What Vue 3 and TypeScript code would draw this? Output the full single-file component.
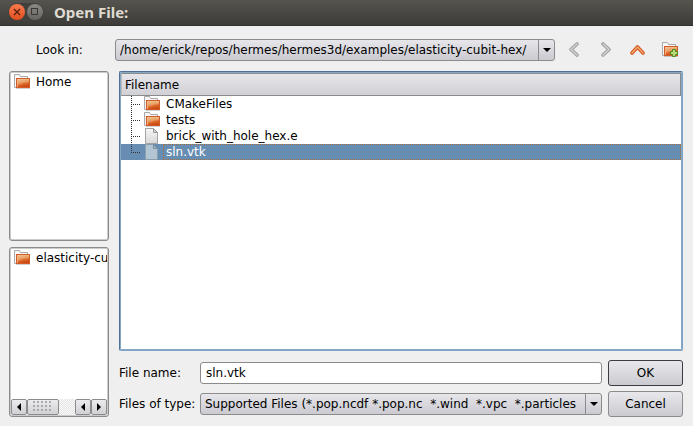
<script setup lang="ts">
import { ref } from 'vue'

interface Entry {
  name: string
  kind: 'folder' | 'file'
}

const path = ref('/home/erick/repos/hermes/hermes3d/examples/elasticity-cubit-hex/')
const paths: string[] = [path.value]

const fileTypes: string[] = [
  'Supported Files (*.pop.ncdf *.pop.nc\u00a0 *.wind\u00a0 *.vpc\u00a0 *.particles',
]
const fileType = ref(fileTypes[0])

const entries: Entry[] = [
  { name: 'CMakeFiles', kind: 'folder' },
  { name: 'tests', kind: 'folder' },
  { name: 'brick_with_hole_hex.e', kind: 'file' },
  { name: 'sln.vtk', kind: 'file' },
]
const fileName = ref('sln.vtk')

function select(entry: Entry) {
  fileName.value = entry.name
}
</script>

<template>
  <svg class="defs" width="0" height="0" aria-hidden="true">
    <defs>
      <linearGradient id="orange" x1="0" y1="0" x2="0.3" y2="1">
        <stop offset="0" stop-color="#f0c08a" />
        <stop offset="0.5" stop-color="#e5873f" />
        <stop offset="1" stop-color="#cf4512" />
      </linearGradient>
      <linearGradient id="paper" x1="0" y1="0" x2="0" y2="1">
        <stop offset="0" stop-color="#f6f6f6" />
        <stop offset="1" stop-color="#d8d8d8" />
      </linearGradient>
      <symbol id="folder" viewBox="0 0 16 16">
        <path d="M.5 13.5V.5h5l1 2h7v2" fill="#f7f7f7" stroke="#a9a9a9" />
        <path d="M.5 13.5h2" stroke="#a9a9a9" />
        <rect x="2.5" y="4.5" width="13" height="9" fill="url(#orange)" stroke="#d05c2b" />
        <path d="M3.5 13V5.5H15" fill="none" stroke="#f5c391" stroke-opacity=".7" />
        <path d="M4 6h11v2q-6 0-11 3z" fill="#fff" fill-opacity=".2" />
        <path d="M2 14.5h14" stroke="#777" stroke-opacity=".35" />
      </symbol>
      <symbol id="file" viewBox="0 0 16 16">
        <path d="M1.5.5h8l4 4v11h-12z" fill="url(#paper)" stroke="#a2a2a2" />
        <path d="M9.5.5v4h4z" fill="#d4d4d4" stroke="#999" stroke-linejoin="round" />
      </symbol>
      <symbol id="file-selected" viewBox="0 0 16 16">
        <path d="M1.5.5h8l4 4v11h-12z" fill="#b3c4d3" stroke="#899fae" />
        <path d="M9.5.5v4h4z" fill="#9fb2c1" stroke="#778e9f" stroke-linejoin="round" />
      </symbol>
    </defs>
  </svg>

  <div class="window">
    <header class="titlebar">
      <div class="controls">
        <button class="control close" aria-label="Close">
          <svg viewBox="0 0 16 16"><path d="M5 5l6 6m0-6l-6 6" stroke="#54200e" stroke-width="1.4" /></svg>
        </button>
        <button class="control" aria-label="Maximize">
          <svg viewBox="0 0 16 16"><rect x="4.5" y="4.5" width="6" height="6" fill="none" stroke="#3a3935" /></svg>
        </button>
      </div>
      <h1>Open File:</h1>
    </header>

    <main class="body">
      <div class="toolbar">
        <label for="look-in">Look in:</label>
        <div class="combo">
          <select id="look-in" v-model="path">
            <option v-for="p in paths" :key="p" :value="p">{{ p }}</option>
          </select>
          <span class="drop"><svg viewBox="0 0 8 4"><path d="M0 0h8L4 4z" /></svg></span>
        </div>
        <nav class="tools" aria-label="Navigation">
          <button class="tool" aria-label="Back">
            <svg viewBox="0 0 16 16" fill="none" stroke-linecap="round" stroke-linejoin="round">
              <path d="M11 2L5 7.500l6 5.500" stroke="#a0a0a0" stroke-width="3.600" />
              <path d="M11 2L5 7.500l6 5.500" stroke="#d0d0d0" stroke-width="1.600" />
            </svg>
          </button>
          <button class="tool" aria-label="Forward">
            <svg viewBox="0 0 16 16" fill="none" stroke-linecap="round" stroke-linejoin="round">
              <path d="M5 2l6 5.500-6 5.500" stroke="#a0a0a0" stroke-width="3.600" />
              <path d="M5 2l6 5.500-6 5.500" stroke="#d0d0d0" stroke-width="1.600" />
            </svg>
          </button>
          <button class="tool" aria-label="Parent directory">
            <svg viewBox="0 0 16 16" fill="none" stroke-linecap="round" stroke-linejoin="round">
              <path d="M2 11l5.500-6 5.500 6" stroke="#d4551f" stroke-width="3.600" />
              <path d="M2 11l5.500-6 5.500 6" stroke="#f3a56c" stroke-width="1.600" />
            </svg>
          </button>
          <button class="tool" aria-label="Create new folder">
            <svg viewBox="0 0 16 16">
              <use href="#folder" width="16" height="16" />
              <path d="M10.5 7.5h3v2h2v3h-2v2h-3v-2h-2v-3h2z" fill="#b5dc79" stroke="#4e8a1c" />
            </svg>
          </button>
        </nav>
      </div>

      <div class="columns">
        <aside class="side">
          <section class="panel" aria-label="Favorite directories">
            <ul>
              <li><svg class="icon"><use href="#folder" /></svg><span>Home</span></li>
            </ul>
          </section>
          <section class="panel" aria-label="Recent directories">
            <ul>
              <li><svg class="icon"><use href="#folder" /></svg><span>elasticity-cubit-hex</span></li>
            </ul>
            <div class="scrollbar">
              <button aria-label="Scroll left"><svg viewBox="0 0 4 8"><path d="M4 0v8L0 4z" /></svg></button>
              <div class="thumb"><i></i></div>
              <div class="track"></div>
              <button aria-label="Scroll left"><svg viewBox="0 0 4 8"><path d="M4 0v8L0 4z" /></svg></button>
              <button aria-label="Scroll right"><svg viewBox="0 0 4 8"><path d="M0 0v8l4-4z" /></svg></button>
            </div>
          </section>
        </aside>

        <div class="content">
          <div class="browser">
            <table>
              <thead>
                <tr><th scope="col">Filename</th></tr>
              </thead>
              <tbody>
                <tr
                  v-for="(entry, index) in entries"
                  :key="entry.name"
                  :class="{ selected: entry.name === fileName }"
                  @click="select(entry)"
                >
                  <td>
                    <div class="row">
                      <svg class="branch" viewBox="0 0 23 16" fill="none" stroke-dasharray="1 1">
                        <path :d="index === entries.length - 1 ? 'M10.5 0v9' : 'M10.5 0v16'" />
                        <path d="M10 8.5h10" />
                      </svg>
                      <svg class="icon">
                        <use :href="entry.kind === 'file' && entry.name === fileName ? '#file-selected' : '#' + entry.kind" />
                      </svg>
                      <span class="name">{{ entry.name }}</span>
                    </div>
                  </td>
                </tr>
              </tbody>
            </table>
          </div>

          <form class="fields" @submit.prevent>
            <label for="file-name">File name:</label>
            <input id="file-name" v-model="fileName" type="text" />
            <button class="push default" type="submit">OK</button>
            <label for="file-type">Files of type:</label>
            <div class="combo">
              <select id="file-type" v-model="fileType">
                <option v-for="t in fileTypes" :key="t" :value="t">{{ t }}</option>
              </select>
              <span class="drop"><svg viewBox="0 0 8 4"><path d="M0 0h8L4 4z" /></svg></span>
            </div>
            <button class="push" type="button">Cancel</button>
          </form>
        </div>
      </div>
    </main>
  </div>
</template>

<style>
body {
  background: #efefef;
}
</style>

<style scoped>
.defs {
  position: absolute;
}
.window {
  display: flex;
  flex-direction: column;
  box-sizing: border-box;
  min-height: 100vh;
  background: #efefef;
  color: #000;
  font: 12px/16px "DejaVu Sans", sans-serif;
}
.window *,
.window *::before {
  box-sizing: border-box;
}
button,
input,
select {
  margin: 0;
  padding: 0;
  border: 0;
  background: none;
  color: inherit;
  font: inherit;
}
svg {
  display: block;
  flex: none;
}
.titlebar {
  display: flex;
  align-items: center;
  gap: 10px;
  height: 26px;
  padding: 0 8px 2px;
  border-bottom: 1px solid #302f2b;
  background: linear-gradient(#55544f, #3c3b37);
  color: #dfdbd2;
}
.titlebar h1 {
  margin: 0;
  font: bold 15px/20px "Noto Sans", sans-serif;
}
.controls {
  display: flex;
  gap: 2px;
  padding: 1px;
  border-radius: 9px;
  background: #42413c;
}
.control {
  width: 16px;
  height: 16px;
  border-radius: 50%;
  background: linear-gradient(#8a8983, #65645e);
}
.control svg {
  width: 16px;
  height: 16px;
}
.close {
  background: linear-gradient(#f97b50, #e24e1c);
}
.body {
  display: flex;
  flex: 1;
  flex-direction: column;
  gap: 8px;
  padding: 11px 10px 9px 9px;
}
.toolbar {
  display: flex;
  align-items: center;
  height: 26px;
}
.toolbar label {
  width: 106px;
  padding-left: 27px;
}
.combo {
  display: flex;
  flex: 1;
  min-width: 0;
  height: 22px;
  border: 1px solid #8b8b8b;
  border-radius: 3px;
  background: linear-gradient(#e6e6eb, #cacad0);
  position: relative;
}
.combo select {
  flex: 1;
  width: 100%;
  min-width: 0;
  padding: 0 20px 0 4px;
  appearance: none;
  outline: 0;
}
.drop {
  position: absolute;
  inset: 0 0 0 auto;
  display: flex;
  align-items: center;
  justify-content: center;
  width: 16px;
  border-left: 1px solid #8b8b8b;
  pointer-events: none;
}
.drop svg {
  width: 8px;
  height: 4px;
}
.tools {
  display: flex;
  gap: 16px;
  padding: 0 5px 0 11px;
}
.tool svg {
  width: 16px;
  height: 16px;
}
.columns {
  display: flex;
  flex: 1;
  gap: 10px;
}
.side {
  display: flex;
  flex-direction: column;
  gap: 6px;
  width: 100px;
}
.panel {
  display: flex;
  flex: 1;
  flex-direction: column;
  justify-content: space-between;
  overflow: hidden;
  padding: 1px;
  border: 1px solid #8b8b8b;
  border-radius: 3px;
  background: #fff;
  box-shadow: inset 0 0 0 1px #ccc;
}
ul {
  margin: 0;
  padding: 0;
  list-style: none;
}
li {
  display: flex;
  gap: 6px;
  overflow: hidden;
  padding: 1px 0 0 3px;
  white-space: nowrap;
}
.icon {
  width: 16px;
  height: 16px;
}
.scrollbar {
  display: flex;
  height: 16px;
}
.scrollbar button,
.thumb {
  display: flex;
  align-items: center;
  justify-content: center;
  width: 16px;
  border: 1px solid #8b8b8b;
  border-radius: 2px;
  background: linear-gradient(#ececef, #d0d0d5);
}
.scrollbar svg {
  width: 4px;
  height: 8px;
}
.scrollbar .thumb {
  width: 32px;
}
.thumb i {
  width: 20px;
  height: 12px;
  background: radial-gradient(circle at 1px 1px, #aaa 1px, transparent 1px) 0 0 / 4px 4px;
}
.track {
  flex: 1;
  background: repeating-conic-gradient(#e4e4e4 0 25%, #fafafa 0 50%) 0 0 / 2px 2px;
}
.content {
  display: flex;
  flex: 1;
  flex-direction: column;
  gap: 9px;
  min-width: 0;
}
.browser {
  flex: 1;
  padding: 1px;
  border: 1px solid #7fa3c2;
  border-top-color: #4c7396;
  border-left-color: #4c7396;
  border-radius: 2px;
  background: #fff;
  box-shadow: inset 0 0 0 1px #85a8c5;
}
table {
  width: 100%;
  border-collapse: separate;
  border-spacing: 0;
}
th {
  height: 23px;
  padding: 0 3px;
  border: 1px solid #8b8b8b;
  border-left-color: #bbb;
  background: linear-gradient(#e6e6ea, #d0d0d5);
  font-weight: normal;
  text-align: left;
}
td {
  padding: 0;
}
.row {
  display: flex;
  height: 16px;
}
.branch {
  width: 23px;
  height: 16px;
  stroke: #333;
}
.name {
  flex: 1;
  margin-left: 3px;
  padding-left: 3px;
}
.selected {
  background: #678db2;
  color: #fff;
}
.selected .name {
  outline: 1px dotted #a3703f;
  outline-offset: -1px;
}
.fields {
  display: grid;
  grid-template-columns: 75px minmax(0, 1fr) 75px;
  align-items: center;
  gap: 5px 6px;
}
.fields label {
  white-space: nowrap;
}
.fields input {
  width: 100%;
  height: 22px;
  padding: 0 5px;
  border: 1px solid #8b8b8b;
  border-radius: 3px;
  background: #fff;
  outline: 0;
}
.push {
  height: 26px;
  border: 1px solid #8b8b8b;
  border-radius: 3px;
  background: linear-gradient(#e8e8ec, #cacad0);
}
.default {
  border-color: #3c3c40;
}
</style>
